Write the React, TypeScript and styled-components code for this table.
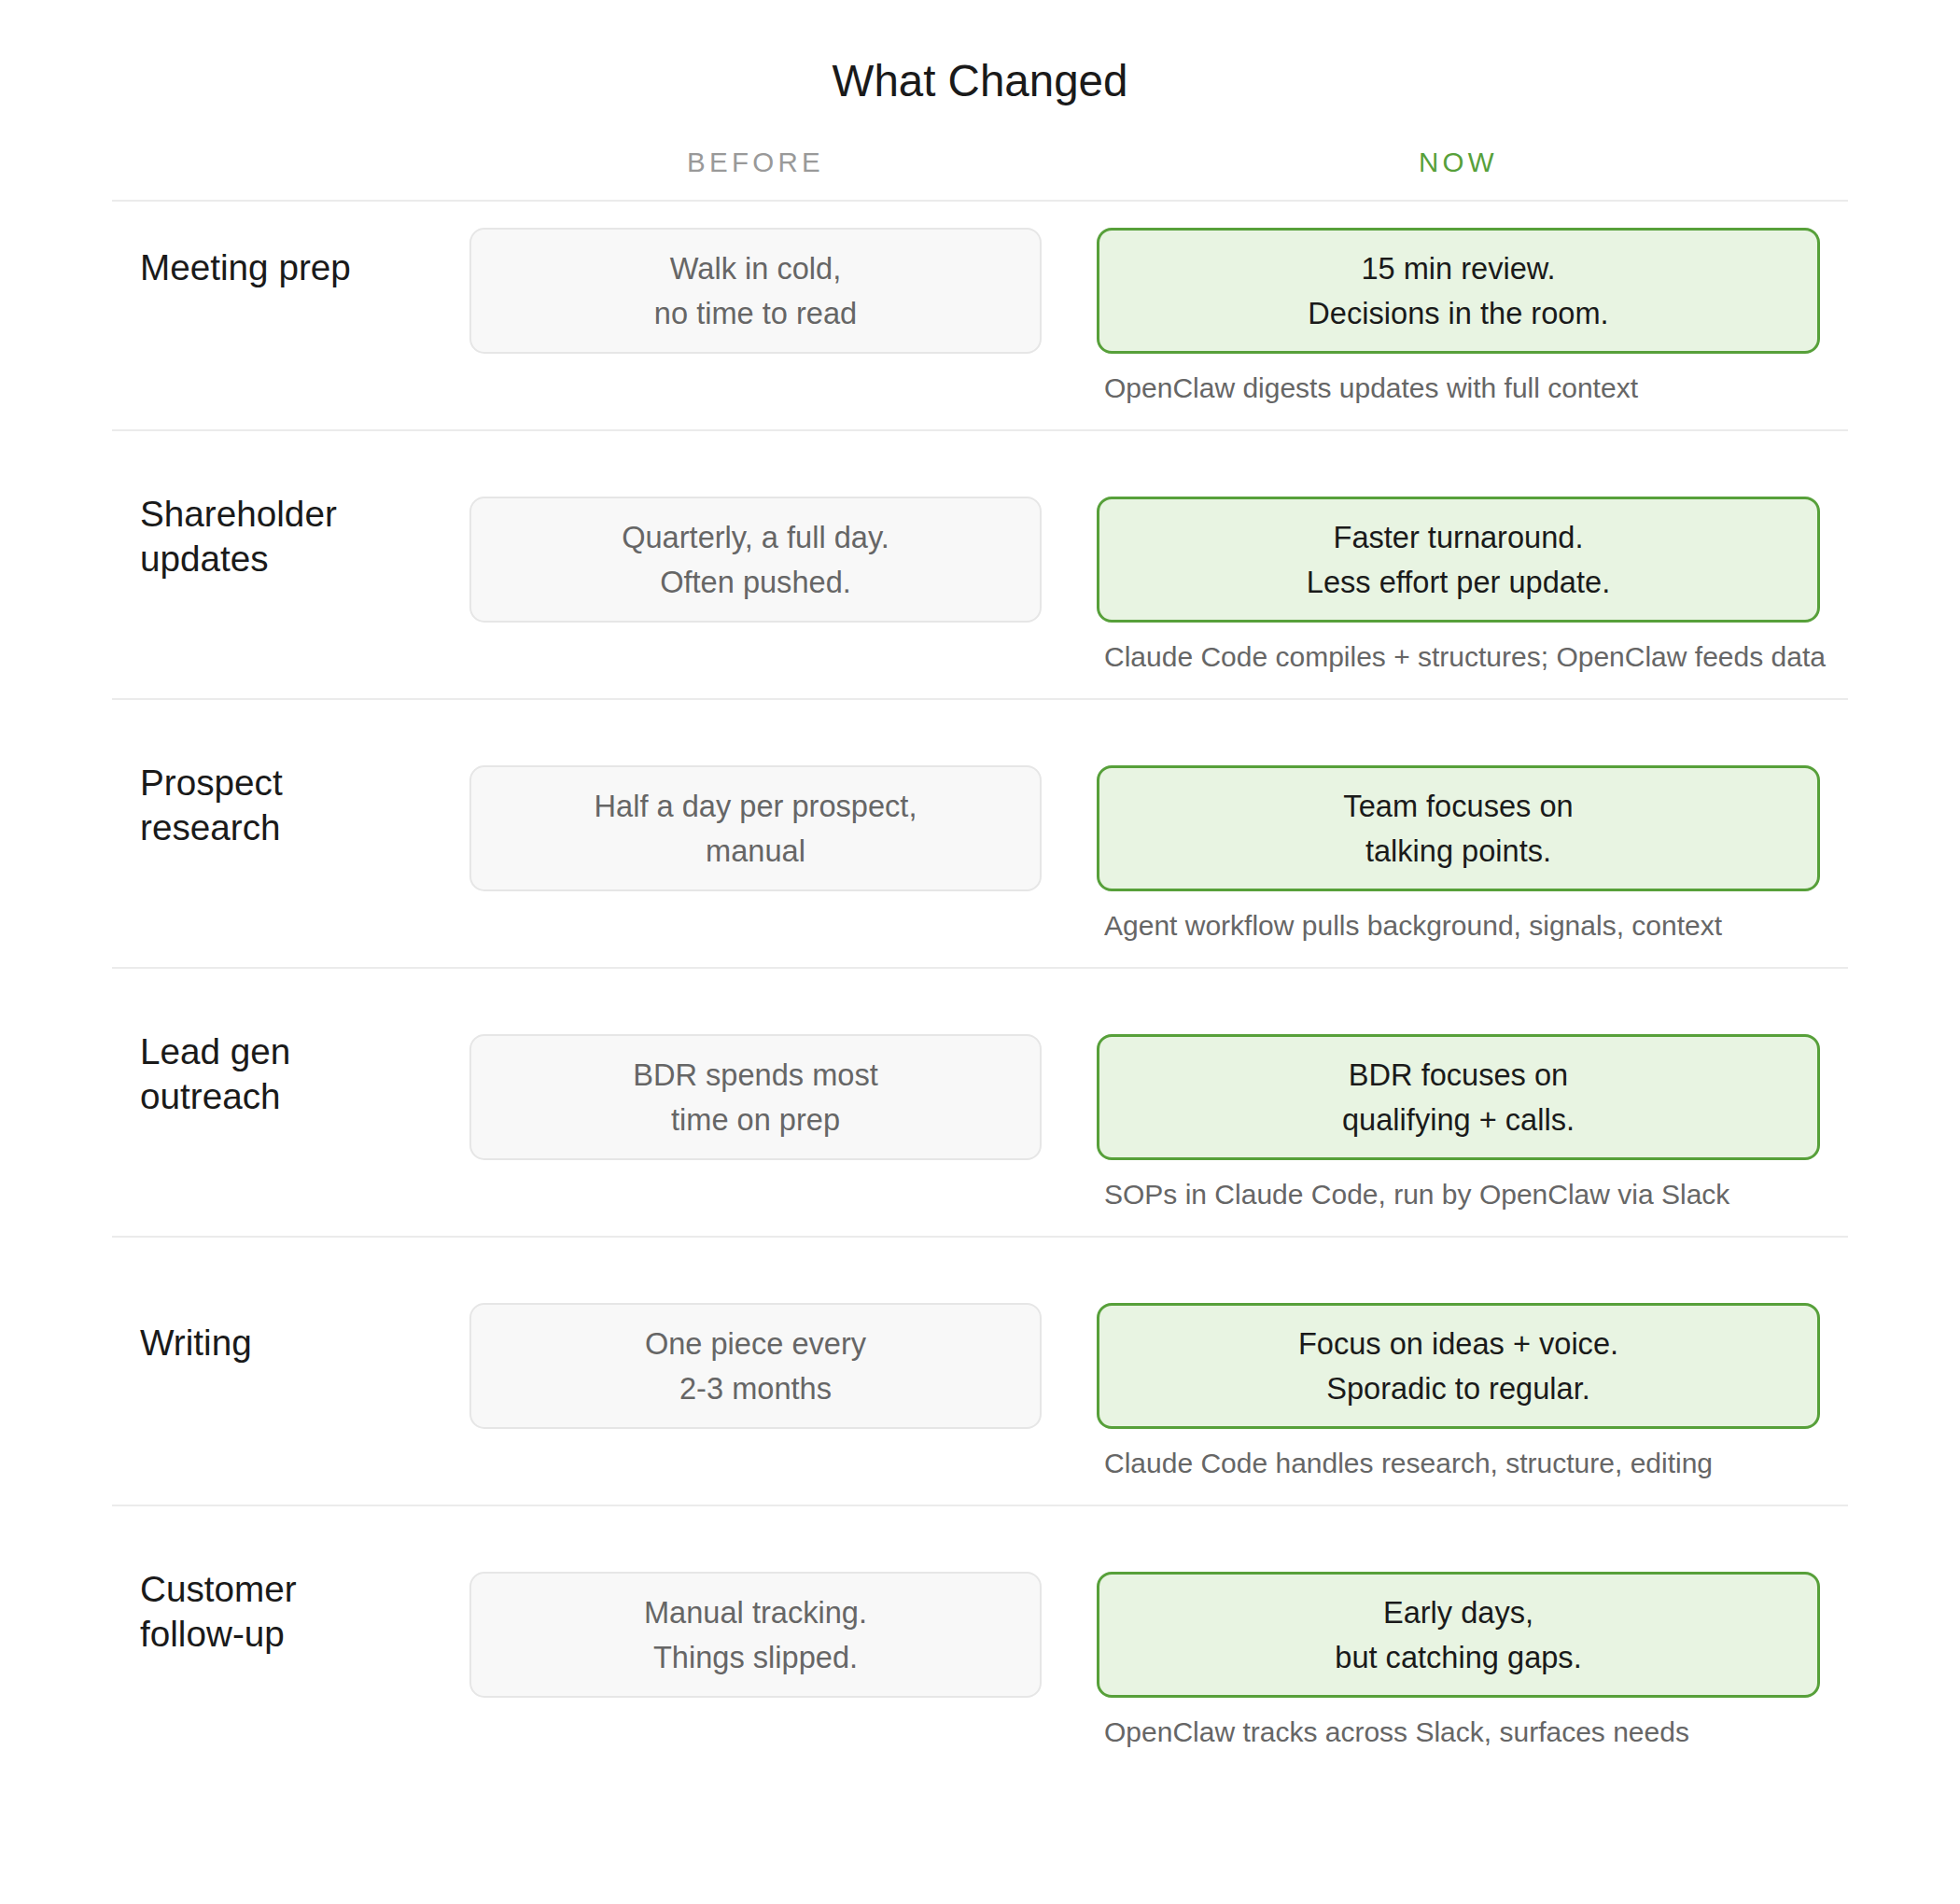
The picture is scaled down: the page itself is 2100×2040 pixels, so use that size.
import React from "react";
import styled, { createGlobalStyle } from "styled-components";

const GlobalStyle = createGlobalStyle`
  html, body {
    margin: 0;
    padding: 0;
    background: #ffffff;
  }
  body {
    font-family: "Liberation Sans", Helvetica, Arial, sans-serif;
    color: #1a1a1a;
  }
  * {
    box-sizing: border-box;
  }
`;

const Page = styled.div`
  width: 1860px;
  margin: 0 auto;
  padding-top: 58px;
`;

const Title = styled.h1`
  margin: 0 0 41px;
  font-size: 47.5px;
  line-height: 57px;
  font-weight: 400;
  text-align: center;
  color: #1a1a1a;
`;

const Grid = styled.div`
  display: grid;
  grid-template-columns: 294px 613px 775px;
  column-gap: 59px;
  padding: 0 30px;
`;

const HeaderRow = styled(Grid)`
  padding-bottom: 23px;
  border-bottom: 2px solid #ebebeb;
`;

const ColumnHead = styled.div<{ $now?: boolean }>`
  font-size: 29.5px;
  line-height: 35px;
  letter-spacing: 4.3px;
  text-transform: uppercase;
  text-align: center;
  color: ${(p) => (p.$now ? "#57a03a" : "#999999")};
`;

const Row = styled(Grid)`
  align-items: start;
  padding-top: 70px;
  padding-bottom: 23px;
  border-bottom: 2px solid #ebebeb;

  &:first-of-type {
    padding-top: 28px;
  }

  &:last-of-type {
    border-bottom: none;
  }
`;

const Label = styled.div`
  height: 86px;
  display: flex;
  align-items: center;
  font-size: 38.7px;
  line-height: 48px;
  color: #1a1a1a;
`;

const Box = styled.div<{ $now?: boolean }>`
  border-radius: 16px;
  text-align: center;
  font-size: 32.6px;
  line-height: 48px;
  border: ${(p) => (p.$now ? "3px solid #57a03a" : "2px solid #e6e6e6")};
  padding: ${(p) => (p.$now ? "16.5px 24px" : "17.5px 24px")};
  background: ${(p) => (p.$now ? "#e8f4e2" : "#f8f8f8")};
  color: ${(p) => (p.$now ? "#1a1a1a" : "#666666")};
`;

const NowCell = styled.div`
  display: flex;
  flex-direction: column;
`;

const Note = styled.div`
  margin-top: 16px;
  padding-left: 8px;
  font-size: 30px;
  line-height: 42px;
  white-space: nowrap;
  color: #666666;
`;

type Item = {
  label: string[];
  before: string[];
  now: string[];
  note: string;
};

const items: Item[] = [
  {
    label: ["Meeting prep"],
    before: ["Walk in cold,", "no time to read"],
    now: ["15 min review.", "Decisions in the room."],
    note: "OpenClaw digests updates with full context",
  },
  {
    label: ["Shareholder", "updates"],
    before: ["Quarterly, a full day.", "Often pushed."],
    now: ["Faster turnaround.", "Less effort per update."],
    note: "Claude Code compiles + structures; OpenClaw feeds data",
  },
  {
    label: ["Prospect", "research"],
    before: ["Half a day per prospect,", "manual"],
    now: ["Team focuses on", "talking points."],
    note: "Agent workflow pulls background, signals, context",
  },
  {
    label: ["Lead gen", "outreach"],
    before: ["BDR spends most", "time on prep"],
    now: ["BDR focuses on", "qualifying + calls."],
    note: "SOPs in Claude Code, run by OpenClaw via Slack",
  },
  {
    label: ["Writing"],
    before: ["One piece every", "2-3 months"],
    now: ["Focus on ideas + voice.", "Sporadic to regular."],
    note: "Claude Code handles research, structure, editing",
  },
  {
    label: ["Customer", "follow-up"],
    before: ["Manual tracking.", "Things slipped."],
    now: ["Early days,", "but catching gaps."],
    note: "OpenClaw tracks across Slack, surfaces needs",
  },
];

const Lines = ({ lines }: { lines: string[] }) => (
  <>
    {lines.map((l, i) => (
      <React.Fragment key={i}>
        {i > 0 && <br />}
        {l}
      </React.Fragment>
    ))}
  </>
);

const App: React.FC = () => {
  return (
    <>
      <GlobalStyle />
      <Page>
        <Title>What Changed</Title>
        <HeaderRow>
          <div />
          <ColumnHead>Before</ColumnHead>
          <ColumnHead $now>Now</ColumnHead>
        </HeaderRow>
        <div>
          {items.map((item) => (
            <Row key={item.note}>
              <Label>
                <div>
                  <Lines lines={item.label} />
                </div>
              </Label>
              <Box>
                <Lines lines={item.before} />
              </Box>
              <NowCell>
                <Box $now>
                  <Lines lines={item.now} />
                </Box>
                <Note>{item.note}</Note>
              </NowCell>
            </Row>
          ))}
        </div>
      </Page>
    </>
  );
};

export default App;
